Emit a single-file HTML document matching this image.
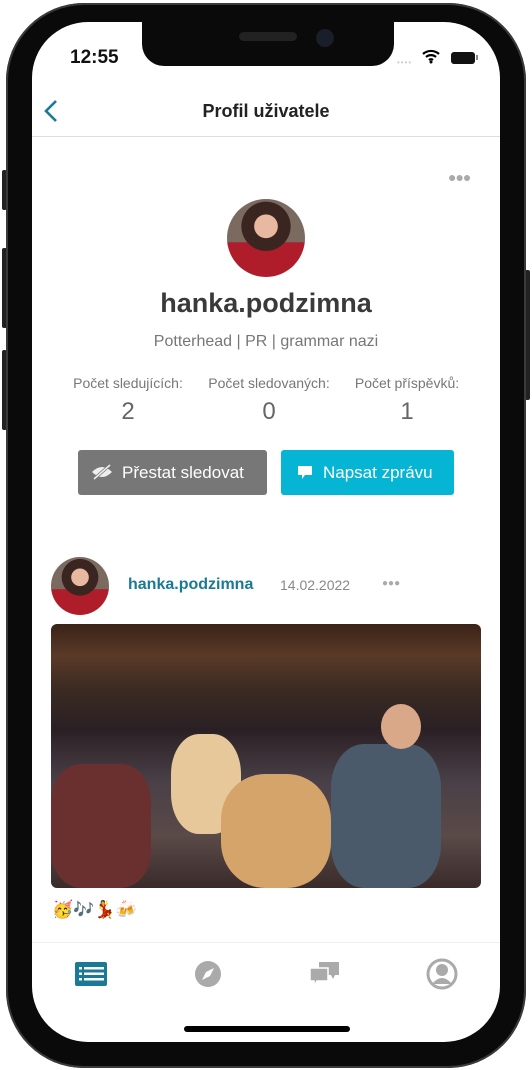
<!DOCTYPE html>
<html><head><meta charset="utf-8"><style>
*{margin:0;padding:0;box-sizing:border-box}
body{width:532px;height:1070px;background:#fff;position:relative;overflow:hidden;font-family:"Liberation Sans","DejaVu Sans",sans-serif}
.frame{position:absolute;left:6px;top:3px;width:520px;height:1065px;background:#0a0a0a;border-radius:78px;box-shadow:0 0 0 2px #3a3a3a inset}
.btn{position:absolute;background:#222;border-radius:2px}
.screen{position:absolute;left:32px;top:22px;width:468px;height:1020px;background:#fff;border-radius:56px;overflow:hidden}
.notch{position:absolute;left:110px;top:0;width:252px;height:44px;background:#0a0a0a;border-radius:0 0 22px 22px}
.abs{position:absolute}
.c{text-align:center}
</style></head><body>
<div class="btn" style="left:2px;top:170px;width:5px;height:40px"></div>
<div class="btn" style="left:2px;top:248px;width:5px;height:80px"></div>
<div class="btn" style="left:2px;top:350px;width:5px;height:80px"></div>
<div class="btn" style="left:525px;top:270px;width:5px;height:130px"></div>
<div class="frame"></div>
<div class="screen">
 <div class="notch"><div class="abs" style="left:97px;top:10px;width:58px;height:9px;border-radius:5px;background:#222"></div><div class="abs" style="left:174px;top:7px;width:18px;height:18px;border-radius:50%;background:#1a1d2a"></div></div>
 <div class="abs" style="left:38px;top:25px;font-size:19px;font-weight:bold;color:#111">12:55</div>
 <div class="abs" style="left:365px;top:36px;font-size:8px;color:#ccc;letter-spacing:1px">••••</div>
 <svg class="abs" style="left:389px;top:26px" width="20" height="16" viewBox="0 0 20 16"><path d="M2 6a12 12 0 0 1 16 0M5 9a7.5 7.5 0 0 1 10 0M8 12a3 3 0 0 1 4 0" stroke="#000" stroke-width="2.2" fill="none"/><circle cx="10" cy="14" r="1.5"/></svg>
 <div class="abs" style="left:419px;top:30px;width:24px;height:12px;border-radius:3px;background:#111"></div>
 <div class="abs" style="left:444px;top:33px;width:2px;height:5px;background:#888"></div>
 <svg class="abs" style="left:10px;top:76px" width="18" height="26"><path d="M14 3L4 13l10 10" stroke="#1a7a96" stroke-width="2.6" fill="none"/></svg>
 <div class="abs c" style="left:0;width:468px;top:79px;font-size:18px;font-weight:bold;color:#222">Profil uživatele</div>
 <div class="abs" style="left:0;top:114px;width:468px;height:1px;background:#ddd"></div>
 <div class="abs" style="left:416px;top:147px;font-size:14px;color:#aaa;letter-spacing:-1px">●●●</div>
 <div class="abs" style="left:195px;top:177px;width:78px;height:78px;border-radius:50%;background:radial-gradient(circle at 50% 35%,#e8b9a0 0 18%,#3a2520 19% 38%,transparent 39%),linear-gradient(#7a6a60 0 55%,#b01d2a 56%)"></div>
 <div class="abs c" style="left:0;width:468px;top:266px;font-size:27px;font-weight:bold;color:#3a3a3a">hanka.podzimna</div>
 <div class="abs c" style="left:0;width:468px;top:311px;font-size:16px;color:#777">Potterhead | PR | grammar nazi</div>
 <div class="abs c" style="left:30px;width:132px;top:353px;font-size:14px;color:#777">Počet sledujících:</div>
 <div class="abs c" style="left:165px;width:144px;top:353px;font-size:14px;color:#777">Počet sledovaných:</div>
 <div class="abs c" style="left:308px;width:134px;top:353px;font-size:14px;color:#777">Počet příspěvků:</div>
 <div class="abs c" style="left:30px;width:132px;top:376px;font-size:24px;color:#666">2</div>
 <div class="abs c" style="left:165px;width:144px;top:376px;font-size:24px;color:#666">0</div>
 <div class="abs c" style="left:308px;width:134px;top:376px;font-size:24px;color:#666">1</div>
 <div class="abs" style="left:46px;top:428px;width:189px;height:45px;background:#777;border-radius:3px;color:#fff;font-size:17px;line-height:45px;padding-left:44px">Přestat sledovat</div>
 <svg class="abs" style="left:59px;top:442px" width="22" height="16"><path d="M1 8q10-10 20 0q-10 10-20 0z" fill="#eee"/><path d="M3 15L19 1" stroke="#777" stroke-width="3"/><path d="M3 15L19 1" stroke="#eee" stroke-width="1.5"/></svg>
 <div class="abs" style="left:249px;top:428px;width:173px;height:45px;background:#06b4d3;border-radius:3px;color:#fff;font-size:17px;line-height:45px;padding-left:42px">Napsat zprávu</div>
 <svg class="abs" style="left:265px;top:443px" width="16" height="15"><path d="M1 1h14v9H8l-3 4v-4H1z" fill="#fff"/></svg>
 <div class="abs" style="left:19px;top:535px;width:58px;height:58px;border-radius:50%;background:radial-gradient(circle at 50% 35%,#e8b9a0 0 18%,#3a2520 19% 38%,transparent 39%),linear-gradient(#7a6a60 0 55%,#b01d2a 56%)"></div>
 <div class="abs" style="left:96px;top:554px;font-size:16px;font-weight:bold;color:#1a7a96">hanka.podzimna</div>
 <div class="abs" style="left:248px;top:555px;font-size:14px;color:#888">14.02.2022</div>
 <div class="abs" style="left:350px;top:556px;font-size:10px;color:#aaa;letter-spacing:0">●●●</div>
 <div class="abs" style="left:19px;top:602px;width:430px;height:264px;border-radius:6px;overflow:hidden;background:linear-gradient(180deg,#3a2318 0%,#5a3a28 12%,#3a2a22 25%,#2a2024 40%,#4a4048 60%,#5a4a48 80%,#3a2a2a 100%)">
  <div class="abs" style="left:120px;top:110px;width:70px;height:100px;border-radius:40%;background:#e6c89a"></div>
  <div class="abs" style="left:170px;top:150px;width:110px;height:114px;border-radius:40%;background:#d4a46a"></div>
  <div class="abs" style="left:280px;top:120px;width:110px;height:144px;background:#4a5a6a;border-radius:30%"></div>
  <div class="abs" style="left:330px;top:80px;width:40px;height:45px;border-radius:50%;background:#d8a888"></div>
  <div class="abs" style="left:0;top:140px;width:100px;height:124px;background:#6a3030;border-radius:30%"></div>
 </div>
 <div class="abs" style="left:20px;top:878px;font-size:17px;font-family:'DejaVu Sans',sans-serif">🥳🎶💃🍻</div>
 <div class="abs" style="left:0;top:920px;width:468px;height:1px;background:#eee"></div>
 <svg class="abs" style="left:43px;top:940px" width="32" height="24"><rect width="32" height="24" rx="2" fill="#1a7a96"/><g fill="#fff"><rect x="4" y="5" width="3" height="2.5"/><rect x="9" y="5" width="20" height="2.5"/><rect x="4" y="10.5" width="3" height="2.5"/><rect x="9" y="10.5" width="20" height="2.5"/><rect x="4" y="16" width="3" height="2.5"/><rect x="9" y="16" width="20" height="2.5"/></g></svg>
 <svg class="abs" style="left:163px;top:939px" width="26" height="26"><circle cx="13" cy="13" r="13" fill="#aaa"/><path d="M19 7l-4 8-8 4 4-8z" fill="#fff"/></svg>
 <svg class="abs" style="left:277px;top:936px" width="32" height="30"><path d="M10 4h20v13h-4l-2 4-2-4H10z" fill="#aaa"/><path d="M1 10h18v13H8l-3 5v-5H1z" fill="#aaa" stroke="#fff" stroke-width="1.5"/></svg>
 <svg class="abs" style="left:394px;top:936px" width="32" height="32"><circle cx="16" cy="16" r="14" fill="none" stroke="#aaa" stroke-width="3"/><circle cx="16" cy="12" r="6" fill="#aaa"/><path d="M6 26q10-12 20 0" fill="#aaa"/></svg>
 <div class="abs" style="left:152px;top:1004px;width:166px;height:6px;border-radius:3px;background:#000"></div>
</div>
</body></html>
